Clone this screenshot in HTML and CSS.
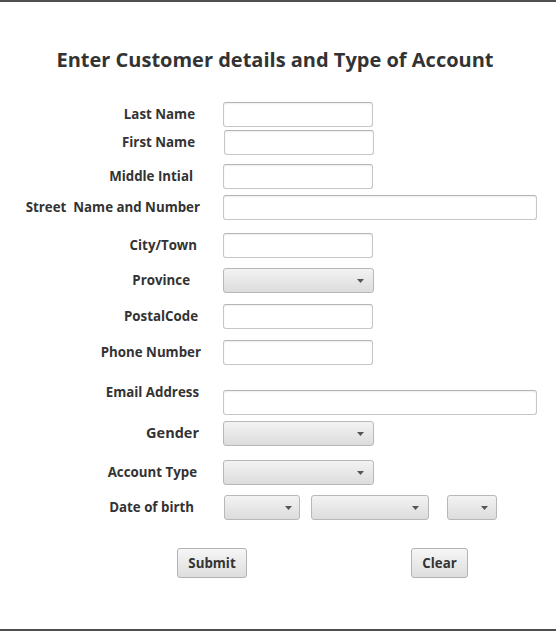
FILE: index.html
```html
<!DOCTYPE html>
<html lang="en">
<head>
<meta charset="utf-8">
<title>Customer details</title>
<link rel="stylesheet" href="styles.css">
</head>
<body>
<div class="window">
  <h1 class="title">Enter Customer details and Type of Account</h1>
  <form class="form">
    <div class="row row--last"><label class="lbl">Last Name</label><span class="field"></span></div>
    <div class="row row--first"><label class="lbl">First Name</label><span class="field"></span></div>
    <div class="row row--middle"><label class="lbl">Middle Intial</label><span class="field"></span></div>
    <div class="row row--street"><label class="lbl">Street&nbsp; Name and Number</label><span class="field field--wide"></span></div>
    <div class="row row--city"><label class="lbl">City/Town</label><span class="field"></span></div>
    <div class="row row--province"><label class="lbl">Province</label><span class="combo"><svg class="arrow" width="7" height="4" viewBox="0 0 7 4"><polygon points="0,0 7,0 3.5,4" fill="#555"/></svg></span></div>
    <div class="row row--postal"><label class="lbl">PostalCode</label><span class="field"></span></div>
    <div class="row row--phone"><label class="lbl">Phone Number</label><span class="field"></span></div>
    <div class="row row--email"><label class="lbl">Email Address</label><span class="field field--wide"></span></div>
    <div class="row row--gender"><label class="lbl">Gender</label><span class="combo"><svg class="arrow" width="7" height="4" viewBox="0 0 7 4"><polygon points="0,0 7,0 3.5,4" fill="#555"/></svg></span></div>
    <div class="row row--account"><label class="lbl">Account Type</label><span class="combo"><svg class="arrow" width="7" height="4" viewBox="0 0 7 4"><polygon points="0,0 7,0 3.5,4" fill="#555"/></svg></span></div>
    <div class="row row--dob"><label class="lbl">Date of birth</label>
      <div class="dob">
        <span class="combo combo--day"><svg class="arrow" width="7" height="4" viewBox="0 0 7 4"><polygon points="0,0 7,0 3.5,4" fill="#555"/></svg></span>
        <span class="combo combo--month"><svg class="arrow" width="7" height="4" viewBox="0 0 7 4"><polygon points="0,0 7,0 3.5,4" fill="#555"/></svg></span>
        <span class="combo combo--year"><svg class="arrow" width="7" height="4" viewBox="0 0 7 4"><polygon points="0,0 7,0 3.5,4" fill="#555"/></svg></span>
      </div>
    </div>
    <div class="buttons">
      <button type="button" class="btn btn--submit">Submit</button>
      <button type="button" class="btn btn--clear">Clear</button>
    </div>
  </form>
</div>
</body>
</html>
```

FILE: styles.css
```css
html, body {
  margin: 0;
  padding: 0;
  background: #ffffff;
}

.window {
  box-sizing: border-box;
  width: 556px;
  height: 631px;
  border-top: 2px solid #4f4f4f;
  border-bottom: 2px solid #4f4f4f;
  background: #ffffff;
  font-family: "Open Sans", "Noto Sans", sans-serif;
  color: #333333;
}

.title {
  margin: 0;
  padding: 40px 6px 0 0;
  line-height: 35px;
  font-size: 20px;
  font-weight: 700;
  text-align: center;
  color: #333333;
}

.form {
  margin: 25px 0 0 0;
  display: flex;
  flex-direction: column;
}

.row {
  display: flex;
  align-items: center;
  height: 25px;
}

.lbl {
  flex: none;
  box-sizing: border-box;
  width: 201px;
  margin-top: -2px;
  text-align: right;
  font-size: 13.3px;
  font-weight: 700;
  line-height: 18px;
  white-space: nowrap;
  color: #333333;
}

.field {
  flex: none;
  box-sizing: border-box;
  width: 150px;
  height: 25px;
  margin-left: 22px;
  background: #ffffff;
  border: 1px solid #c6c6c6;
  border-top-color: #b4b4b4;
  border-radius: 3px;
  box-shadow: inset 0 1px 2px rgba(0, 0, 0, 0.07);
}

.field--wide {
  width: 314px;
}

.combo {
  flex: none;
  box-sizing: border-box;
  display: flex;
  align-items: center;
  justify-content: flex-end;
  width: 151px;
  height: 25px;
  margin-left: 22px;
  padding-right: 9px;
  background: linear-gradient(#f3f3f3, #dcdcdc);
  border: 1px solid #b8b8b8;
  border-radius: 3px;
}

.arrow {
  display: block;
}

.dob {
  display: flex;
  margin-left: 23px;
}

.dob .combo {
  margin-left: 0;
}

.combo--day {
  width: 76px;
  padding-right: 7px;
}

.combo--month {
  width: 118px;
  margin-left: 11px !important;
}

.combo--year {
  width: 50px;
  padding-right: 8px;
  margin-left: 18px !important;
}

/* per-row placement */
.row--last .lbl { padding-right: 6px; }
.row--first { margin-top: 3px; }
.row--first .lbl { padding-right: 6px; }
.row--first .field { margin-left: 23px; }
.row--middle { margin-top: 9px; }
.row--middle .lbl { padding-right: 8px; }
.row--street { margin-top: 6px; }
.row--street .lbl { padding-right: 1px; }
.row--city { margin-top: 13px; }
.row--city .lbl { padding-right: 4px; }
.row--province { margin-top: 10px; }
.row--province .lbl { padding-right: 11px; }
.row--postal { margin-top: 11px; }
.row--postal .lbl { padding-right: 3px; }
.row--phone { margin-top: 11px; }
.row--phone .lbl { padding-right: 0; }
.row--email { margin-top: 25px; }
.row--email .lbl { padding-right: 2px; align-self: flex-start; margin-top: -7px; }
.row--gender { margin-top: 6px; }
.row--gender .lbl { padding-right: 2px; font-size: 14.5px; }
.row--account { margin-top: 14px; }
.row--account .lbl { padding-right: 4px; }
.row--dob { margin-top: 10px; }
.row--dob .lbl { padding-right: 7px; }

.buttons {
  display: flex;
  gap: 164px;
  margin-top: 28px;
  padding-left: 177px;
}

.btn {
  box-sizing: border-box;
  height: 30px;
  padding: 0 0 1px 0;
  font-family: "Open Sans", "Noto Sans", sans-serif;
  font-size: 13.3px;
  font-weight: 700;
  color: #333333;
  background: linear-gradient(#f6f6f6, #dedede);
  border: 1px solid #b2b2b2;
  border-radius: 3px;
}

.btn--submit { width: 70px; }
.btn--clear { width: 57px; }
```
